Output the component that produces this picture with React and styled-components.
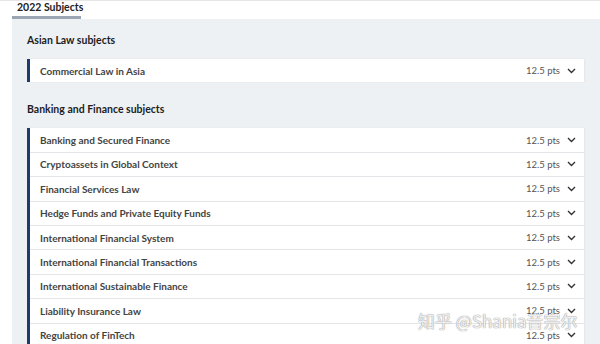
import React from "react";
import styled, { createGlobalStyle } from "styled-components";

const Global = createGlobalStyle`
  body {
    margin: 0;
    background: #ffffff;
    font-family: Lato, "Noto Sans", sans-serif;
  }
`;

const groups = [
  {
    title: "Asian Law subjects",
    items: ["Commercial Law in Asia"],
  },
  {
    title: "Banking and Finance subjects",
    items: [
      "Banking and Secured Finance",
      "Cryptoassets in Global Context",
      "Financial Services Law",
      "Hedge Funds and Private Equity Funds",
      "International Financial System",
      "International Financial Transactions",
      "International Sustainable Finance",
      "Liability Insurance Law",
      "Regulation of FinTech",
      "Securities Regulation",
    ],
  },
];

function Chevron() {
  return (
    <svg width="9" height="6" viewBox="0 0 9 6" fill="none">
      <path d="M1 1l3.5 3.5L8 1" stroke="#333" strokeWidth="1.4" />
    </svg>
  );
}

function App() {
  return (
    <Page>
      <Global />
      <Tabs>
        <Tab>2022 Subjects</Tab>
      </Tabs>
      <Panel>
        {groups.map((g) => (
          <Group key={g.title}>
            <GroupTitle>{g.title}</GroupTitle>
            <List>
              {g.items.map((name) => (
                <Row key={name}>
                  <Name>{name}</Name>
                  <Points>12.5 pts</Points>
                  <Chevron />
                </Row>
              ))}
            </List>
          </Group>
        ))}
      </Panel>
      <Watermark>知乎 @Shania音宗尔</Watermark>
    </Page>
  );
}

const Page = styled.div`
  position: relative;
  width: 600px;
  height: 343px;
  overflow: hidden;
  border-top: 1px solid #e6e6e6;
`;

const Tabs = styled.div`
  display: flex;
  padding-left: 12px;
  padding-top: 1px;
`;

const Tab = styled.div`
  width: 69px;
  padding: 0 0 4px 5px;
  box-sizing: border-box;
  font-size: 10.5px;
  line-height: 10px;
  font-weight: 700;
  color: #222;
  border-bottom: 3px solid #9ba6b5;
  white-space: nowrap;
`;

const Panel = styled.div`
  margin-left: 12px;
  background: #eef1f4;
  padding: 15px 16px 0 15px;
  min-height: 330px;
`;

const Group = styled.div`
  margin-bottom: 21px;
`;

const GroupTitle = styled.div`
  font-size: 10.5px;
  line-height: 12px;
  font-weight: 700;
  color: #1d1d1d;
  margin-bottom: 13px;
`;

const List = styled.div`
  background: #fff;
  border-left: 3px solid #1f3a6c;
  box-shadow: 1px 0 2px rgba(0, 0, 0, 0.05);
`;

const Row = styled.div`
  display: flex;
  align-items: center;
  height: 23.4px;
  padding: 0 8px 0 10px;
  border-bottom: 1px solid #e3e5e8;
  &:last-child {
    border-bottom: none;
  }
  svg {
    margin-left: 7px;
    flex-shrink: 0;
  }
`;

const Name = styled.div`
  flex: 1;
  font-size: 10px;
  font-weight: 700;
  color: #444;
`;

const Points = styled.div`
  font-size: 9.5px;
  color: #555;
`;

const Watermark = styled.div`
  position: absolute;
  left: 418px;
  top: 307px;
  font-family: "Noto Sans CJK SC", "Noto Sans", sans-serif;
  font-size: 17px;
  color: rgba(255, 255, 255, 0.85);
  text-shadow: 0 0 1px #999, 0 0 1px #999;
  white-space: nowrap;
`;

export default App;
